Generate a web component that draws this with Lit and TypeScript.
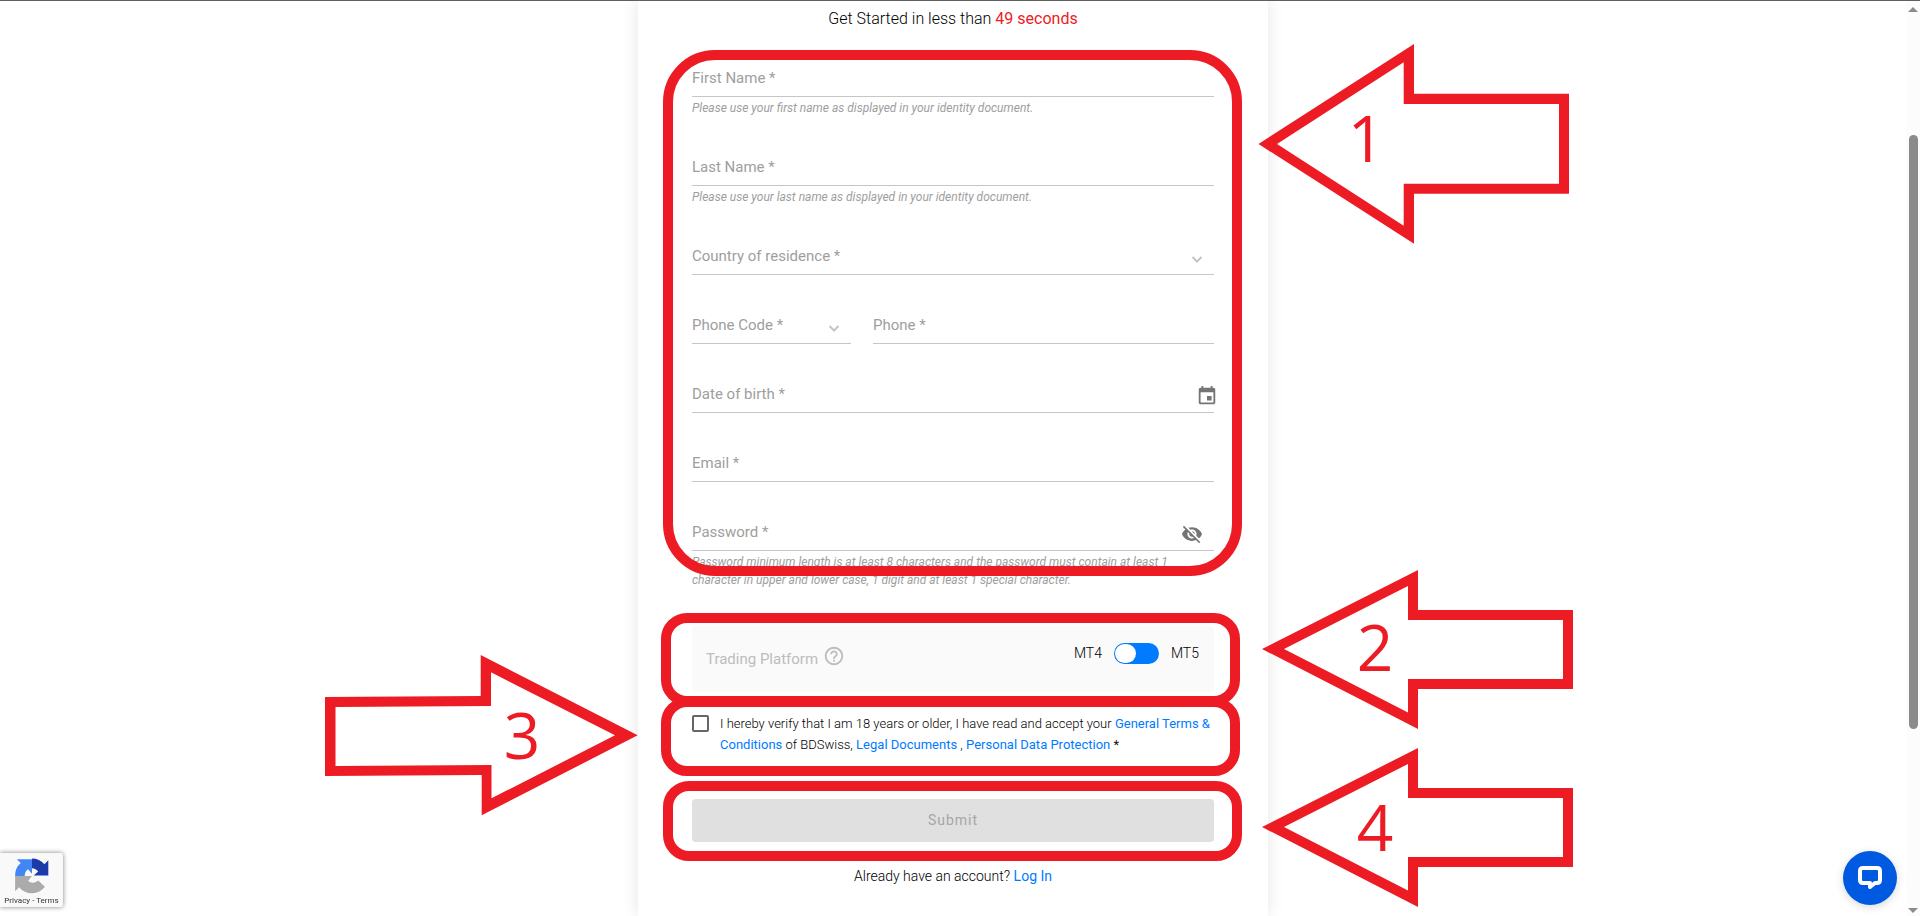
import { LitElement, html, css, svg, nothing } from "lit";
import { customElement, property } from "lit/decorators.js";

const EVENT_ICON =
  "M17 12h-5v5h5v-5zM16 1v2H8V1H6v2H5c-1.11 0-1.99.9-1.99 2L3 19c0 1.1.89 2 2 2h14c1.1 0 2-.9 2-2V5c0-1.1-.9-2-2-2h-1V1h-2zm3 18H5V8h14v11z";
const VISIBILITY_OFF_ICON =
  "M12 7c2.76 0 5 2.24 5 5 0 .65-.13 1.26-.36 1.83l2.92 2.92c1.51-1.26 2.7-2.89 3.43-4.75-1.73-4.39-6-7.5-11-7.5-1.4 0-2.74.25-3.98.7l2.16 2.16C10.74 7.13 11.35 7 12 7zM2 4.27l2.28 2.28.46.46C3.08 8.3 1.78 10.02 1 12c1.73 4.39 6 7.5 11 7.5 1.55 0 3.03-.3 4.38-.84l.42.42L19.73 22 21 20.73 3.27 3 2 4.27zM7.53 9.8l1.55 1.55c-.05.21-.08.43-.08.65 0 1.66 1.34 3 3 3 .22 0 .44-.03.65-.08l1.55 1.55c-.67.33-1.41.53-2.2.53-2.76 0-5-2.24-5-5 0-.79.2-1.53.53-2.2zm4.31-.78l3.15 3.15.02-.16c0-1.66-1.34-3-3-3l-.17.01z";
const HELP_ICON =
  "M11 18h2v-2h-2v2zm1-16C6.48 2 2 6.48 2 12s4.48 10 10 10 10-4.48 10-10S17.52 2 12 2zm0 18c-4.41 0-8-3.59-8-8s3.59-8 8-8 8 3.59 8 8-3.59 8-8 8zm0-14c-2.21 0-4 1.79-4 4h2c0-1.1.9-2 2-2s2 .9 2 2c0 2-3 1.75-3 5h2c0-2.25 3-2.5 3-5 0-2.21-1.79-4-4-4z";

@customElement("form-field")
class FormField extends LitElement {
  @property() label = "";
  @property() kind = "text";
  @property() hint = "";

  static styles = css`
    :host {
      display: block;
      min-width: 0;
    }
    .line {
      display: grid;
      grid-template-columns: 1fr auto;
      align-items: center;
      height: 36px;
      border-bottom: 1px solid #c6c6c6;
    }
    .label {
      grid-area: 1 / 1;
      font-size: 15px;
      line-height: 36px;
      color: #9e9e9e;
      pointer-events: none;
    }
    .control {
      grid-area: 1 / 1 / 2 / 3;
      width: 100%;
      height: 36px;
      margin: 0;
      padding: 0;
      border: 0;
      outline: 0;
      background: transparent;
      appearance: none;
      font: inherit;
      font-size: 15px;
      color: #222;
    }
    .icon {
      grid-area: 1 / 2;
      display: block;
      height: 22px;
      margin: 4px 0 0;
      padding: 0;
      border: 0;
      background: none;
      color: #757575;
      z-index: 1;
    }
    .chevron {
      margin: 8px 11px 0 0;
      height: 10px;
      color: #c4c4c4;
      pointer-events: none;
    }
    .date {
      margin-right: -4px;
    }
    .eye {
      margin-right: 11px;
    }
    .icon svg {
      display: block;
    }
    .hint {
      margin: 2px 0 0;
      font-size: 12px;
      line-height: 18px;
      font-style: italic;
      color: #9e9e9e;
    }
  `;

  renderIcon() {
    const glyph = (d: string) => html`<svg width="22" height="22" viewBox="0 0 24 24" fill="currentColor"><path d=${d} /></svg>`;
    if (this.kind === "select") {
      return html`<span class="icon chevron"
        ><svg width="12" height="10" viewBox="0 0 12 10" fill="none" stroke="currentColor" stroke-width="2">
          <path d="M1.5 2 L6 6.5 L10.5 2" /></svg
      ></span>`;
    }
    if (this.kind === "date") {
      return html`<button class="icon date" type="button" aria-label="Choose date">${glyph(EVENT_ICON)}</button>`;
    }
    if (this.kind === "password") {
      return html`<button class="icon eye" type="button" aria-label="Show password">${glyph(VISIBILITY_OFF_ICON)}</button>`;
    }
    return nothing;
  }

  render() {
    const type = this.kind === "date" ? "text" : this.kind;
    return html`
      <div class="line">
        <label class="label" for="control">${this.label} *</label>
        ${this.kind === "select"
          ? html`<select class="control" id="control"><option value=""></option></select>`
          : html`<input class="control" id="control" type=${type} />`}
        ${this.renderIcon()}
      </div>
      ${this.hint ? html`<p class="hint">${this.hint}</p>` : nothing}
    `;
  }
}

@customElement("callout-marks")
class CalloutMarks extends LitElement {
  static styles = css`
    :host {
      position: absolute;
      inset: 0;
      pointer-events: none;
      z-index: 2;
    }
    .box {
      position: absolute;
      box-sizing: border-box;
      border: 10px solid #ed1c24;
      border-radius: 26px;
      width: 579px;
      left: 25px;
    }
    .fields {
      top: 50px;
      height: 526px;
      border-radius: 52px;
    }
    .platform {
      top: 613px;
      height: 93px;
      left: 23px;
    }
    .consent {
      top: 697px;
      height: 79px;
      left: 23px;
    }
    .submit {
      top: 781px;
      height: 80px;
    }
    .arrows {
      position: absolute;
      top: 0;
      left: -318px;
      fill: #ed1c24;
      fill-rule: evenodd;
      font-family: "Open Sans", "Noto Sans", sans-serif;
      font-size: 64px;
      text-anchor: middle;
    }
  `;

  render() {
    const short =
      "M1262 649 L1418 570 V610 H1573 V689 H1418 V729 Z M1284 649 L1408 712.5 V679 H1563 V620 H1408 V586 Z";
    return html`
      <div class="box fields"></div>
      <div class="box platform"></div>
      <div class="box consent"></div>
      <div class="box submit"></div>
      <svg class="arrows" width="1260" height="916" viewBox="320 0 1260 916">
        ${svg`
          <path d="M1258.5 144 L1414 44 V93.7 H1569 V193.7 H1414 V243.7 Z M1277 144 L1403.7 225.7 V183.7 H1559 V104 H1403.7 V62.3 Z" />
          <path d=${short} />
          <path d=${short} transform="translate(0 178)" />
          <path d="M637.7 735.3 L480.7 655 V696 L325 697 V776 L481.7 775 V815.3 Z M615 735.3 L491.5 798.3 V765 L335.5 766 V707 L491 706 V672.3 Z" />
          <text x="1366" y="162">1</text>
          <text x="1375" y="671">2</text>
          <text x="522" y="759">3</text>
          <text x="1375" y="851">4</text>
        `}
      </svg>
    `;
  }
}

@customElement("app-root")
class AppRoot extends LitElement {
  static styles = css`
    :host {
      display: block;
      font-family: Roboto, sans-serif;
      color: #111;
      background: #fff;
    }
    .page {
      display: flex;
      height: 100vh;
      overflow: hidden;
      box-sizing: border-box;
      border-top: 1px solid #5f5f5f;
    }
    .main {
      flex: 1;
      display: flex;
      justify-content: center;
      min-width: 0;
    }
    .card {
      position: relative;
      box-sizing: border-box;
      width: 630px;
      height: max-content;
      min-height: 100%;
      margin-top: -1px;
      padding: 9px 54px 30px;
      background: #fff;
      box-shadow: 0 0 16px rgba(0, 0, 0, 0.1);
    }
    .title {
      margin: 0 0 31px;
      font-size: 16px;
      font-weight: 400;
      line-height: 20px;
      text-align: center;
    }
    .accent {
      color: #ed1c24;
    }
    .fields {
      display: grid;
      gap: 32px;
    }
    .phone {
      display: grid;
      grid-template-columns: 159px 1fr;
      gap: 22px;
    }
    .platform {
      display: flex;
      justify-content: space-between;
      box-sizing: border-box;
      min-height: 65px;
      margin-top: 37px;
      padding: 16px 15px 16px 14px;
      border-radius: 4px;
      background: #fafafa;
    }
    .platform-name {
      display: flex;
      gap: 5px;
      font-size: 15px;
      line-height: 34px;
      color: #bdbdbd;
    }
    .help {
      height: 22px;
      margin-top: 3px;
      padding: 0;
      border: 0;
      background: none;
      color: #bdbdbd;
    }
    .help svg,
    .logo {
      display: block;
    }
    .switch {
      display: flex;
      gap: 12px;
      height: 22px;
      align-items: center;
      font-size: 14px;
    }
    .toggle {
      appearance: none;
      width: 45px;
      height: 21px;
      margin: 0;
      padding: 1px;
      border-radius: 11px;
      background: #007bff;
    }
    .toggle::before {
      content: "";
      display: block;
      width: 21px;
      height: 19px;
      border-radius: 10px;
      background: #fff;
    }
    .consent {
      display: flex;
      gap: 11px;
      margin-top: 21px;
      font-size: 13px;
      line-height: 21px;
    }
    .check {
      appearance: none;
      flex: none;
      box-sizing: border-box;
      width: 17px;
      height: 17px;
      margin: 2px 0 0;
      border: 2px solid #666;
      border-radius: 2px;
    }
    .light {
      font-weight: 300;
      color: #000;
    }
    .link {
      color: #007bff;
      text-decoration: none;
      font-weight: 400;
    }
    .submit {
      display: block;
      width: 100%;
      height: 43px;
      margin-top: 44px;
      padding: 0 0 2px;
      border: 0;
      border-radius: 4px;
      background: #e0e0e0;
      color: #a6a6a6;
      font-family: inherit;
      font-size: 14px;
      font-weight: 400;
      letter-spacing: 1px;
    }
    .login {
      margin: 24px 0 0;
      font-size: 14px;
      line-height: 20px;
      text-align: center;
    }
    .scroll {
      display: flex;
      flex-direction: column;
      align-items: center;
      box-sizing: border-box;
      width: 14px;
      padding: 6px 0 3px;
      background: #fcfcfc;
    }
    .before {
      flex: 123;
    }
    .thumb {
      flex: 593;
      width: 9px;
      border-radius: 5px;
      background: #8b8b8b;
    }
    .after {
      flex: 179;
    }
    .up,
    .down {
      border: 5px solid transparent;
    }
    .up {
      border-top: 0;
      border-bottom-color: #8b8b8b;
    }
    .down {
      border-bottom: 0;
      border-top-color: #8b8b8b;
    }
    .badge {
      position: fixed;
      left: 0;
      bottom: 9px;
      box-sizing: border-box;
      width: 63px;
      padding-top: 5px;
      height: 54px;
      border-radius: 0 3px 3px 0;
      background: #f9f9f9;
      box-shadow: 0 0 5px #808080;
      font-size: 8px;
      line-height: 14px;
      text-align: center;
      white-space: nowrap;
      color: #333;
    }
    .badge a {
      color: inherit;
      text-decoration: none;
    }
    .logo {
      margin: 0 auto;
    }
    .chat {
      position: fixed;
      right: 23px;
      bottom: 11px;
      display: grid;
      place-items: center;
      width: 54px;
      height: 54px;
      padding: 0;
      border: 0;
      border-radius: 50%;
      background: #0059e1;
      box-shadow: 0 2px 8px rgba(0, 0, 0, 0.16);
    }
  `;

  render() {
    return html`
      <div class="page">
        <main class="main">
          <form class="card">
            <h1 class="title"><span class="light">Get Started in less than</span> <span class="accent">49 seconds</span></h1>
            <div class="fields">
              <form-field label="First Name" hint="Please use your first name as displayed in your identity document."></form-field>
              <form-field label="Last Name" hint="Please use your last name as displayed in your identity document."></form-field>
              <form-field label="Country of residence" kind="select"></form-field>
              <div class="phone">
                <form-field label="Phone Code" kind="select"></form-field>
                <form-field label="Phone" kind="tel"></form-field>
              </div>
              <form-field label="Date of birth" kind="date"></form-field>
              <form-field label="Email" kind="email"></form-field>
              <form-field
                label="Password"
                kind="password"
                hint="Password minimum length is at least 8 characters and the password must contain at least 1 character in upper and lower case, 1 digit and at least 1 special character."
              ></form-field>
            </div>

            <div class="platform">
              <div class="platform-name">
                <span>Trading Platform</span>
                <button class="help" type="button" aria-label="About trading platforms">
                  <svg width="22" height="22" viewBox="0 0 24 24" fill="currentColor"><path d=${HELP_ICON} /></svg>
                </button>
              </div>
              <div class="switch">
                <label class="light" for="platform">MT4</label>
                <input class="toggle" id="platform" type="checkbox" role="switch" />
                <label class="light" for="platform">MT5</label>
              </div>
            </div>

            <div class="consent">
              <input class="check" id="consent" type="checkbox" />
              <label for="consent"
                ><span class="light">I hereby verify that I am 18 years or older, I have read and accept your</span>
                <a class="link" href="#terms">General Terms &amp; Conditions</a> <span class="light">of BDSwiss,</span>
                <a class="link" href="#legal">Legal Documents</a> <span class="light">,</span>
                <a class="link" href="#privacy">Personal Data Protection</a> *</label
              >
            </div>

            <button class="submit" type="submit" disabled>Submit</button>
            <p class="login"><span class="light">Already have an account?</span> <a class="link" href="#login">Log In</a></p>
            <callout-marks></callout-marks>
          </form>
        </main>
        <div class="scroll" aria-hidden="true">
          <span class="up"></span><span class="before"></span><span class="thumb"></span><span class="after"></span
          ><span class="down"></span>
        </div>
      </div>

      <div class="badge">
        <svg class="logo" width="36" height="36" viewBox="0 0 64 64">
          <path fill="#1c3aa9" d="M61 31V4l-7 7A29 29 0 0 0 32 1v17a14 14 0 0 1 11 6l-8 7z" />
          <path fill="#4285f4" d="M32 2H5l7 7A29 29 0 0 0 2 32h17a14 14 0 0 1 6-12l7 8z" />
          <path fill="#ababab" d="M2 32v27l7-7a29 29 0 0 0 46-1L43 40a14 14 0 0 1-18 1l7-9z" />
        </svg>
        <a href="#privacy-policy">Privacy</a> - <a href="#terms-of-use">Terms</a>
      </div>

      <button class="chat" type="button" aria-label="Open chat">
        <svg width="26" height="26" viewBox="0 0 26 26" fill="none" stroke="#fff" stroke-width="4" stroke-linejoin="round">
          <path d="M6 3 H20 Q23 3 23 6 V15 Q23 18 20 18 H18 L13 22 V18 H6 Q3 18 3 15 V6 Q3 3 6 3 Z" />
        </svg>
      </button>
    `;
  }
}
